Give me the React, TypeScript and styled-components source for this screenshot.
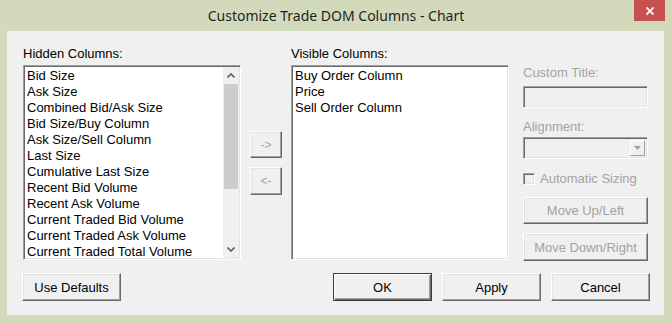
import React from 'react';
import styled, { createGlobalStyle } from 'styled-components';

const GlobalStyle = createGlobalStyle`
  html, body {
    margin: 0;
    padding: 0;
    background: #d3d9bb;
  }
  body {
    font-family: "Liberation Sans", Arial, sans-serif;
    font-size: 13px;
    color: #000;
  }
`;

const Window = styled.div`
  width: 672px;
  height: 323px;
  background: #d3d9bb;
  display: flex;
  flex-direction: column;
  box-sizing: border-box;
`;

const TitleBar = styled.div`
  height: 31px;
  display: grid;
  grid-template-columns: 38px 1fr 38px;
  flex-shrink: 0;
`;

const Title = styled.div`
  grid-column: 2;
  text-align: center;
  font-family: "Noto Sans", "Open Sans", sans-serif;
  font-size: 14px;
  line-height: 20px;
  padding-top: 6px;
  color: #1f1f1f;
`;

const CloseButton = styled.div`
  grid-column: 3;
  width: 31px;
  height: 21px;
  background: #c75050;
  display: flex;
  align-items: center;
  justify-content: center;
`;

const Client = styled.div`
  flex: 1;
  margin: 0 8px 8px 7px;
  background: #f0f0f0;
  padding: 15px 14px 0 16px;
  display: flex;
  flex-direction: column;
`;

const TopRow = styled.div`
  display: flex;
  align-items: flex-start;
  gap: 9px;
`;

const ListColumn = styled.div`
  width: 218px;
  display: flex;
  flex-direction: column;
`;

const Label = styled.div<{ $disabled?: boolean; $top?: number }>`
  line-height: 16px;
  height: 16px;
  white-space: nowrap;
  color: ${(p) => (p.$disabled ? '#a3a3a3' : '#000')};
  margin-top: ${(p) => p.$top ?? 0}px;
`;

const Sunken = styled.div`
  box-sizing: border-box;
  border: 1px solid;
  border-color: #a0a0a0 #fff #fff #a0a0a0;
  box-shadow: inset 1px 1px #696969, inset -1px -1px #e3e3e3;
`;

const ListBox = styled(Sunken)`
  margin-top: 3px;
  height: 195px;
  background: #fff;
  display: flex;
  padding: 1px;
`;

const Items = styled.div`
  flex: 1;
  overflow: hidden;
  padding: 1px 0 0 2px;
`;

const Item = styled.div`
  line-height: 16px;
  height: 16px;
  white-space: nowrap;
`;

const ScrollBar = styled.div`
  width: 16px;
  display: flex;
  flex-direction: column;
  background: #f0f0f0;
`;

const ScrollArrow = styled.div`
  height: 17px;
  display: flex;
  align-items: center;
  justify-content: center;
`;

const Track = styled.div`
  flex: 1;
`;

const Thumb = styled.div`
  height: 105px;
  margin: 0 1px;
  background: #cdcdcd;
`;

const ArrowColumn = styled.div`
  width: 32px;
  padding-top: 85px;
  display: flex;
  flex-direction: column;
  gap: 9px;
`;

const RaisedButton = styled.div<{ $h?: number; $disabled?: boolean; $default?: boolean }>`
  box-sizing: border-box;
  height: ${(p) => p.$h ?? 28}px;
  background: #f0f0f0;
  display: flex;
  align-items: center;
  justify-content: center;
  white-space: nowrap;
  color: ${(p) => (p.$disabled ? '#a3a3a3' : '#000')};
  border: 1px solid;
  border-color: ${(p) => (p.$default ? '#3c3c3c' : '#fff #696969 #696969 #fff')};
  box-shadow: ${(p) =>
    p.$default
      ? 'inset 1px 1px #fff, inset -1px -1px #696969, inset -2px -2px #a0a0a0'
      : 'inset -1px -1px #a0a0a0, inset 1px 1px #e3e3e3'};
`;

const ArrowButton = styled(RaisedButton)`
  font-size: 12px;
`;

const RightPanel = styled.div`
  width: 125px;
  margin-left: 5px;
  padding-top: 19px;
  display: flex;
  flex-direction: column;
`;

const TextBox = styled(Sunken)`
  margin-top: 5px;
  height: 22px;
  background: #f0f0f0;
`;

const Dropdown = styled(Sunken)`
  margin-top: 2px;
  height: 22px;
  background: #f0f0f0;
  display: flex;
  justify-content: flex-end;
  padding: 2px;
`;

const DropButton = styled.div`
  box-sizing: border-box;
  width: 15px;
  height: 100%;
  background: #f0f0f0;
  border: 1px solid;
  border-color: #fff #a0a0a0 #a0a0a0 #fff;
  display: flex;
  align-items: center;
  justify-content: center;
`;

const CheckRow = styled.div`
  margin-top: 12px;
  height: 15px;
  display: flex;
  align-items: center;
  gap: 5px;
  color: #a3a3a3;
  white-space: nowrap;
`;

const CheckBox = styled(Sunken)`
  width: 12px;
  height: 12px;
  background: #f0f0f0;
`;

const MoveButton = styled(RaisedButton)<{ $top: number }>`
  margin-top: ${(p) => p.$top}px;
`;

const BottomRow = styled.div`
  margin-top: 12px;
  display: flex;
  gap: 10px;
  margin-left: -1px;
`;

const DialogButton = styled(RaisedButton)`
  width: 99px;
`;

const Spacer = styled.div`
  flex: 1;
`;

const Chevron = ({ up }: { up?: boolean }) => (
  <svg width="8" height="5" viewBox="0 0 8 5">
    <polyline
      points={up ? '0.5,4.5 4,1 7.5,4.5' : '0.5,0.5 4,4 7.5,0.5'}
      fill="none"
      stroke="#606060"
      strokeWidth="1.6"
    />
  </svg>
);

const hiddenColumns = [
  'Bid Size',
  'Ask Size',
  'Combined Bid/Ask Size',
  'Bid Size/Buy Column',
  'Ask Size/Sell Column',
  'Last Size',
  'Cumulative Last Size',
  'Recent Bid Volume',
  'Recent Ask Volume',
  'Current Traded Bid Volume',
  'Current Traded Ask Volume',
  'Current Traded Total Volume',
];

const visibleColumns = ['Buy Order Column', 'Price', 'Sell Order Column'];

const App: React.FC = () => {
  return (
    <>
      <GlobalStyle />
      <Window>
        <TitleBar>
          <Title>Customize Trade DOM Columns - Chart</Title>
          <CloseButton>
            <svg width="8" height="8" viewBox="0 0 8 8">
              <path d="M0.5 0.5 L7.5 7.5 M7.5 0.5 L0.5 7.5" stroke="#fff" strokeWidth="1.8" />
            </svg>
          </CloseButton>
        </TitleBar>
        <Client>
          <TopRow>
            <ListColumn>
              <Label>Hidden Columns:</Label>
              <ListBox>
                <Items>
                  {hiddenColumns.map((c) => (
                    <Item key={c}>{c}</Item>
                  ))}
                </Items>
                <ScrollBar>
                  <ScrollArrow>
                    <Chevron up />
                  </ScrollArrow>
                  <Track>
                    <Thumb />
                  </Track>
                  <ScrollArrow>
                    <Chevron />
                  </ScrollArrow>
                </ScrollBar>
              </ListBox>
            </ListColumn>

            <ArrowColumn>
              <ArrowButton $h={27} $disabled>-&gt;</ArrowButton>
              <ArrowButton $h={28} $disabled>&lt;-</ArrowButton>
            </ArrowColumn>

            <ListColumn>
              <Label>Visible Columns:</Label>
              <ListBox>
                <Items>
                  {visibleColumns.map((c) => (
                    <Item key={c}>{c}</Item>
                  ))}
                </Items>
              </ListBox>
            </ListColumn>

            <RightPanel>
              <Label $disabled>Custom Title:</Label>
              <TextBox />
              <Label $disabled $top={11}>Alignment:</Label>
              <Dropdown>
                <DropButton>
                  <svg width="7" height="4" viewBox="0 0 7 4">
                    <polygon points="0,0 7,0 3.5,4" fill="#a0a0a0" />
                  </svg>
                </DropButton>
              </Dropdown>
              <CheckRow>
                <CheckBox />
                Automatic Sizing
              </CheckRow>
              <MoveButton $top={11} $h={27} $disabled>Move Up/Left</MoveButton>
              <MoveButton $top={9} $h={28} $disabled>Move Down/Right</MoveButton>
            </RightPanel>
          </TopRow>

          <BottomRow>
            <DialogButton>Use Defaults</DialogButton>
            <Spacer />
            <DialogButton $default>OK</DialogButton>
            <DialogButton>Apply</DialogButton>
            <DialogButton>Cancel</DialogButton>
          </BottomRow>
        </Client>
      </Window>
    </>
  );
};

export default App;
